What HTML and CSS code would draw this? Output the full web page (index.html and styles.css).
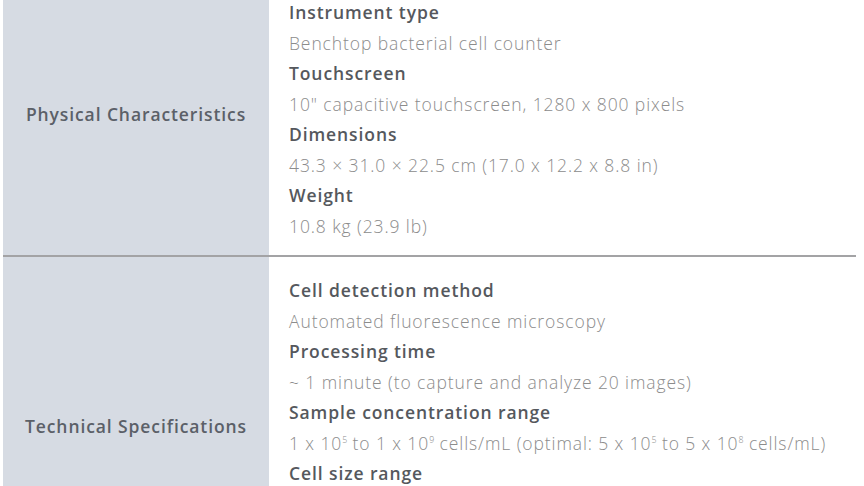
FILE: index.html
```html
<!DOCTYPE html>
<html>
<head>
<meta charset="utf-8">
<link rel="stylesheet" href="styles.css">
</head>
<body>
<div class="specs">
  <section class="group">
    <div class="group-title">Physical Characteristics</div>
    <dl class="group-body">
      <dt>Instrument type</dt>
      <dd>Benchtop bacterial cell counter</dd>
      <dt>Touchscreen</dt>
      <dd>10" capacitive touchscreen, 1280 x 800 pixels</dd>
      <dt>Dimensions</dt>
      <dd>43.3 × 31.0 × 22.5 cm (17.0 x 12.2 x 8.8 in)</dd>
      <dt>Weight</dt>
      <dd>10.8 kg (23.9 lb)</dd>
    </dl>
  </section>
  <section class="group group-tall">
    <div class="group-title">Technical Specifications</div>
    <dl class="group-body">
      <dt>Cell detection method</dt>
      <dd>Automated fluorescence microscopy</dd>
      <dt>Processing time</dt>
      <dd>~ 1 minute (to capture and analyze 20 images)</dd>
      <dt>Sample concentration range</dt>
      <dd>1 x 10<sup>5</sup> to 1 x 10<sup>9</sup> cells/mL (optimal: 5 x 10<sup>5</sup> to 5 x 10<sup>8</sup> cells/mL)</dd>
      <dt>Cell size range</dt>
    </dl>
  </section>
</div>
</body>
</html>
```

FILE: styles.css
```css
html, body {
  margin: 0;
  padding: 0;
  background: #ffffff;
  overflow: hidden;
}

body {
  font-family: "Open Sans", "Noto Sans", sans-serif;
  font-size: 17.5px;
  letter-spacing: 0.9px;
}

.specs {
  margin: -21px 8px 0 3px;
}

.group {
  display: grid;
  grid-template-columns: 266px 1fr;
}

.group + .group {
  border-top: 2px solid #a3a3a5;
}

.group-tall {
  min-height: 337px;
}

.group-title {
  background: #d6dbe3;
  color: #5b6068;
  font-weight: 600;
  display: flex;
  align-items: center;
  justify-content: center;
  padding-bottom: 6px;
}

.group-tall .group-title {
  padding-bottom: 0;
}

.group-body {
  margin: 0;
  padding: 18px 0 14px 20px;
}

.group-body dt {
  color: #55585d;
  font-weight: 600;
  line-height: 30.5px;
  height: 30.5px;
}

.group-body dd {
  margin: 0;
  color: #8c8c8c;
  font-weight: 300;
  line-height: 30.5px;
  height: 30.5px;
}

.group-body sup {
  font-size: 0.5em;
  line-height: 0;
  vertical-align: 0.75em;
  letter-spacing: 0;
}
```
